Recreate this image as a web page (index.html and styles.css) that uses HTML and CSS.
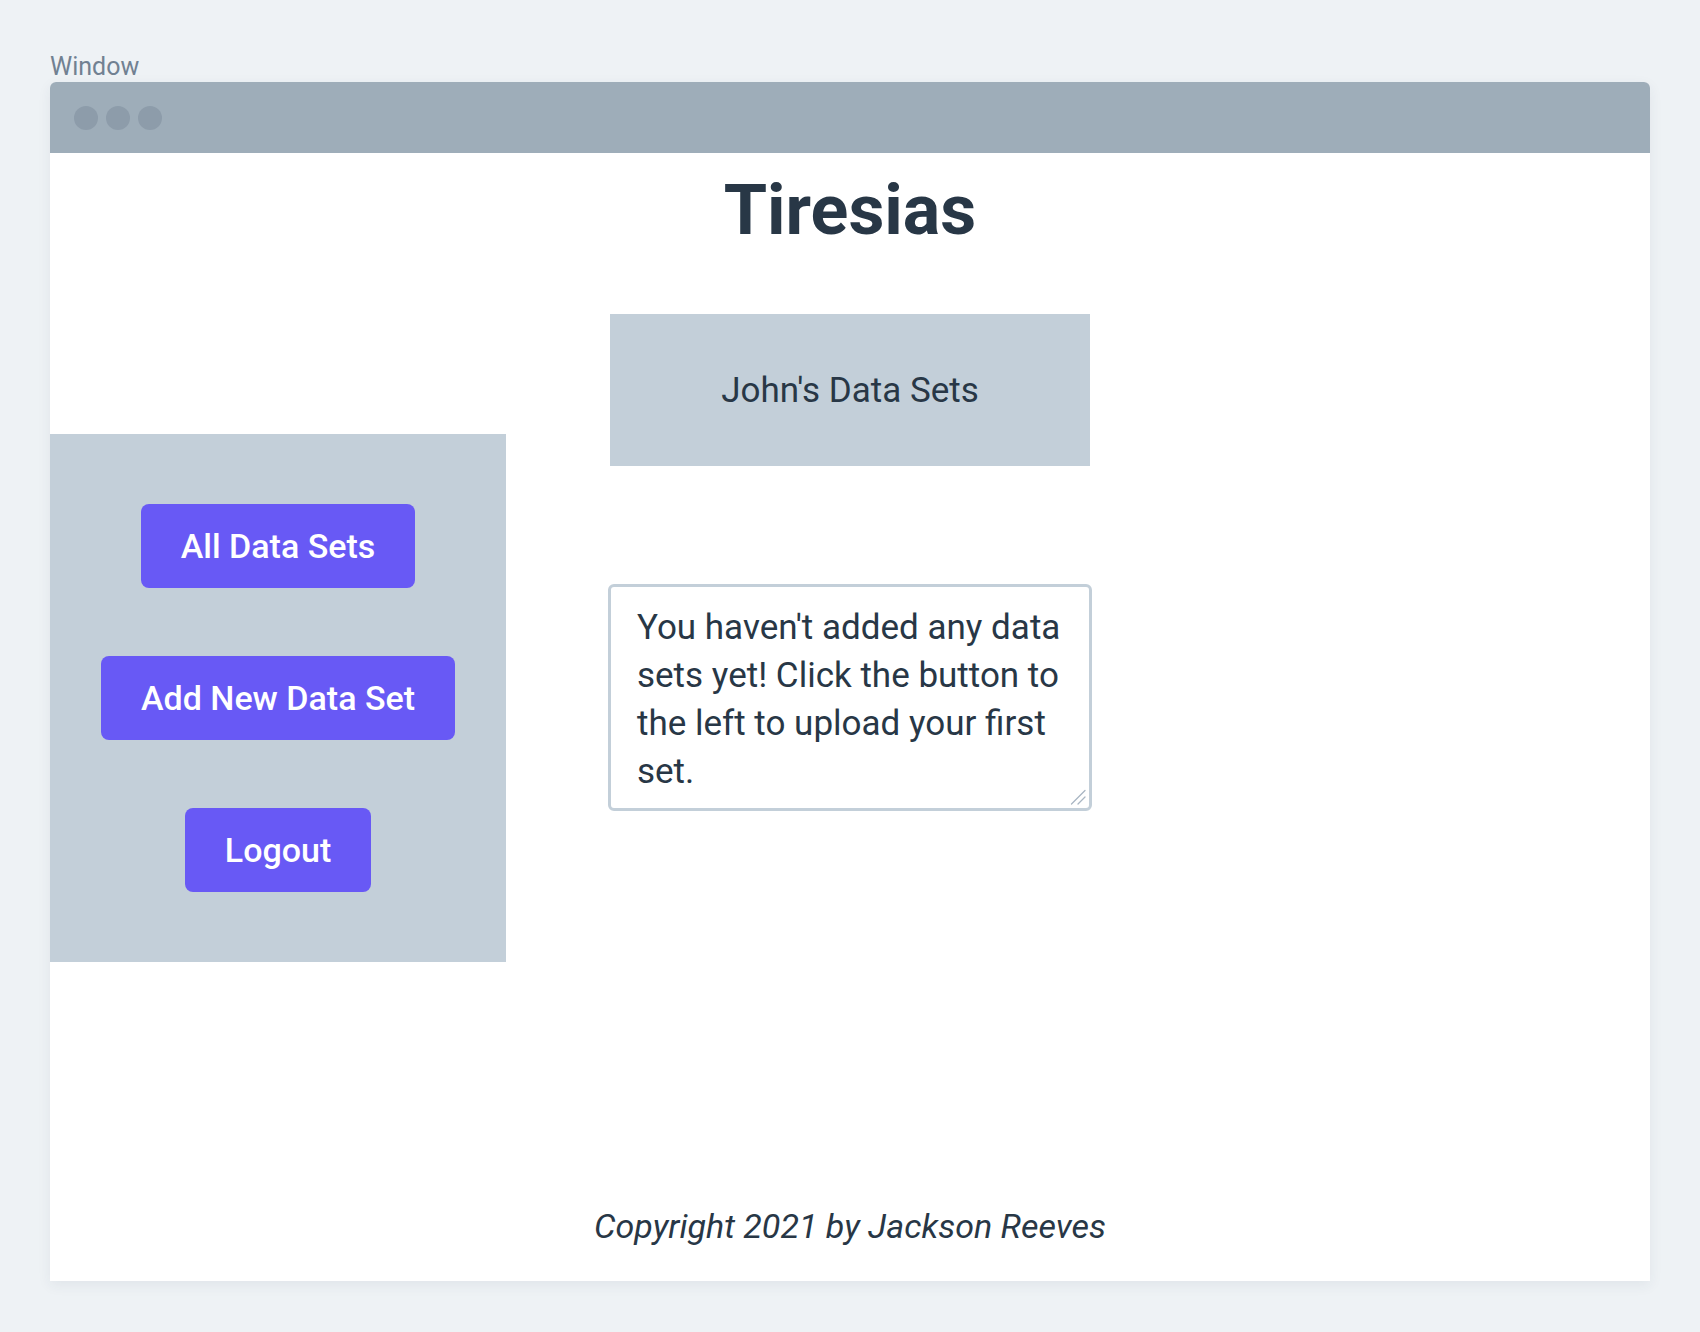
FILE: index.html
```html
<!DOCTYPE html>
<html lang="en">
<head>
<meta charset="utf-8">
<title>Tiresias</title>
<link rel="stylesheet" href="styles.css">
</head>
<body>
<div class="frame">
  <div class="frame-label">Window</div>
  <div class="window">
    <div class="titlebar">
      <span class="dot"></span><span class="dot"></span><span class="dot"></span>
    </div>
    <div class="content">
      <h1 class="title">Tiresias</h1>
      <div class="layout">
        <nav class="sidebar">
          <button class="btn">All Data Sets</button>
          <button class="btn">Add New Data Set</button>
          <button class="btn">Logout</button>
        </nav>
        <main class="main">
          <div class="heading-box">John's Data Sets</div>
          <div class="message-wrap">
            <textarea class="message" readonly>You haven't added any data sets yet! Click the button to the left to upload your first set.</textarea>
            <svg class="grip" width="16" height="16" viewBox="0 0 16 16" aria-hidden="true">
              <path d="M1.5 15 L15 1.5 M8 15 L15 8" stroke="#a9b6c3" stroke-width="1.3" fill="none" stroke-linecap="round"/>
            </svg>
          </div>
        </main>
      </div>
      <footer class="footer">Copyright 2021 by Jackson Reeves</footer>
    </div>
  </div>
</div>
</body>
</html>
```

FILE: styles.css
```css
* { box-sizing: border-box; }
html, body { margin: 0; padding: 0; }
body {
  background: #eef2f5;
  font-family: Roboto, "Liberation Sans", sans-serif;
  color: #2a3a4a;
}
.frame {
  padding: 52px 50px 51px;
}
.frame-label {
  font-size: 25px;
  line-height: 30px;
  color: #718192;
}
.window {
  height: 1199px;
  display: flex;
  flex-direction: column;
  background: #fff;
  border-radius: 6px 6px 0 0;
  box-shadow: 0 4px 14px rgba(40, 60, 80, 0.07);
}
.titlebar {
  height: 71px;
  flex: none;
  display: flex;
  align-items: center;
  gap: 8px;
  padding-left: 24px;
  background: #9eadb9;
  border-radius: 6px 6px 0 0;
}
.dot {
  width: 24px;
  height: 24px;
  border-radius: 50%;
  background: #8d9caa;
}
.content {
  flex: 1;
  display: flex;
  flex-direction: column;
}
.title {
  margin: 16px 0 0;
  text-align: center;
  font-size: 70px;
  line-height: 82px;
  font-weight: 700;
  color: #283746;
}
.layout {
  margin-top: 63px;
  display: grid;
  grid-template-columns: 1fr 484px 1fr;
  align-items: start;
}
.sidebar {
  grid-column: 1;
  grid-row: 1;
  width: 456px;
  margin-top: 120px;
  padding: 70px 0 70px;
  background: #c3cfd9;
  display: flex;
  flex-direction: column;
  align-items: center;
  gap: 68px;
}
.btn {
  font-family: inherit;
  font-size: 34px;
  font-weight: 500;
  line-height: 38px;
  padding: 23px 40px;
  color: #fff;
  background: #6859f5;
  border: none;
  border-radius: 8px;
}
.main {
  grid-column: 2;
  grid-row: 1;
  display: flex;
  flex-direction: column;
  align-items: center;
}
.heading-box {
  width: 480px;
  height: 152px;
  display: flex;
  align-items: center;
  justify-content: center;
  background: #c3cfd9;
  font-size: 35px;
  color: #283746;
}
.message-wrap {
  position: relative;
  margin-top: 118px;
  width: 484px;
  height: 227px;
}
.message {
  display: block;
  width: 100%;
  height: 100%;
  padding: 17px 20px 0 26px;
  border: 3px solid #c3cfd9;
  border-radius: 6px;
  font-family: inherit;
  font-size: 35px;
  line-height: 48px;
  color: #283746;
  background: #fff;
  overflow: hidden;
  outline: none;
  resize: none;
}
.grip {
  position: absolute;
  right: 6px;
  bottom: 6px;
}
.footer {
  margin-top: auto;
  padding-bottom: 34px;
  text-align: center;
  font-size: 34px;
  line-height: 41px;
  font-style: italic;
  color: #283746;
}
```
